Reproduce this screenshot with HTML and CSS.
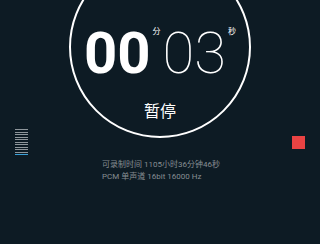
FILE: index.html
```html
<!DOCTYPE html>
<html lang="zh">
<head>
<meta charset="utf-8">
<link rel="stylesheet" href="styles.css">
</head>
<body>
<div class="screen">
  <div class="row">
    <div class="meter">
      <i></i><i></i><i></i><i></i><i></i><i></i><i></i><i></i><i></i><i></i><i class="active"></i>
    </div>
    <div class="dial">
      <div class="timer">
        <span class="min">00</span><span class="unit u-min">分</span><span class="sec">03</span><span class="unit u-sec">秒</span>
      </div>
      <div class="state">暂停</div>
    </div>
    <div class="stop"></div>
  </div>
  <div class="info">
    <div>可录制时间 1105小时36分钟46秒</div>
    <div>PCM 单声道 16bit 16000 Hz</div>
  </div>
</div>
</body>
</html>
```
FILE: styles.css
```css
html, body {
  margin: 0;
  padding: 0;
  background: #0d1b24;
}
.screen {
  width: 320px;
  height: 244px;
  overflow: hidden;
  background: #0d1b24;
  font-family: Roboto, "Noto Sans CJK SC", sans-serif;
  color: #fff;
}
.row {
  display: flex;
  justify-content: space-between;
  align-items: flex-start;
  padding: 0 15px;
  margin-top: -44px;
}
.meter {
  width: 13px;
  margin-top: 173px;
  display: flex;
  flex-direction: column;
  gap: 1.5px;
}
.meter i {
  display: block;
  height: 1px;
  background: #8e969b;
}
.meter i.active {
  background: #3a9fd6;
}
.dial {
  box-sizing: border-box;
  width: 182px;
  height: 182px;
  border: 2px solid #fff;
  border-radius: 50%;
  display: flex;
  flex-direction: column;
  align-items: center;
  padding-top: 66px;
}
.timer {
  display: flex;
  align-items: flex-start;
  line-height: 58px;
  font-size: 58px;
  margin-left: 0;
}
.min {
  font-weight: 700;
}
.sec {
  font-weight: 100;
  margin-left: 2px;
}
.unit {
  font-family: "Noto Sans CJK SC", sans-serif;
  font-size: 8px;
  line-height: 10px;
  margin-top: 2px;
}
.u-min {
  margin-left: 2px;
}
.u-sec {
  margin-left: 2px;
}
.state {
  font-family: "Noto Sans CJK SC", sans-serif;
  font-size: 16px;
  line-height: 20px;
  margin-top: 18px;
}
.stop {
  width: 13px;
  height: 13px;
  background: #e94343;
  margin-top: 180px;
}
.info {
  margin-top: 4px;
  padding-left: 102px;
  font-family: Roboto, "Noto Sans CJK SC", sans-serif;
  font-size: 8px;
  line-height: 12px;
  color: #878e93;
}
```
